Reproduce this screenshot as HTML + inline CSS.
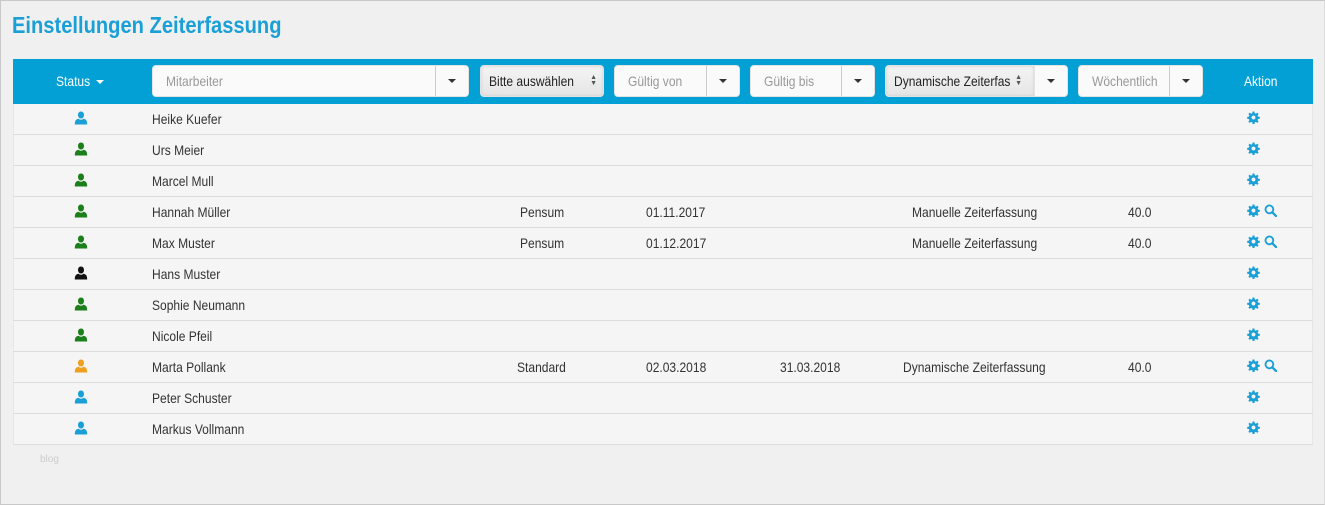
<!DOCTYPE html>
<html><head><meta charset="utf-8"><style>
*{box-sizing:border-box;margin:0;padding:0}
body{width:1325px;height:505px;background:#f0f0f0;font-family:"Liberation Sans",sans-serif;position:relative;overflow:hidden;color:#333;font-size:14px}
.n{display:inline-block;transform:scaleX(.86);transform-origin:0 50%;white-space:nowrap}
.frame{position:absolute;left:0;top:0;width:1325px;height:505px;border:1px solid #c8c8c8;border-right-color:#ddd}
h1{position:absolute;left:12px;top:12px;font-size:23px;color:#1a9fd6;font-weight:bold;transform:scaleX(.875);transform-origin:0 0;white-space:nowrap}
.hdr{position:absolute;left:13px;top:59px;width:1300px;height:45px;background:#03a0d5}
.a{position:absolute}
.ctl{position:absolute;top:6px;height:32px;background:#fafafa;border-radius:4px;border:1px solid #e3e3e3;color:#999;font-size:14px;line-height:30px;padding-left:13px;white-space:nowrap;overflow:hidden}
.btn{position:absolute;top:0;right:0;height:30px;border-left:1px solid #ccc;background:#fafafa}
.caret{position:absolute;left:50%;top:13px;margin-left:-4px;border-left:4px solid transparent;border-right:4px solid transparent;border-top:4px solid #333}
.sel{background:linear-gradient(#f4f4f4,#e6e6e6);color:#222;box-shadow:inset 0 0 3px #ccc}
.ud{position:absolute;right:6px;top:9px;font-size:7px;line-height:6px;color:#555;background:inherit}
.tw{color:#fff;font-size:14px;line-height:45px}
.row{position:absolute;left:13px;width:1300px;height:31px;background:#f5f5f5;border-bottom:1px solid #dcdcdc;border-left:1px solid #e6e6e6;border-right:1px solid #e6e6e6}
.row>span{position:absolute;top:0;line-height:31px;white-space:nowrap}
.row>span.i{top:-2px}
.row>span.g{top:-3px;left:1233px;color:#1a9fd6}
.row svg{vertical-align:middle}
</style></head><body>
<svg width="0" height="0" style="position:absolute">
<defs>
<symbol id="p" viewBox="0 0 14 14"><path d="M7 0.5C4.9 0.5 4 2.2 4 4C4 5.8 5 7.5 7 7.5C9 7.5 10 5.8 10 4C10 2.2 9.1 0.5 7 0.5Z M4.6 7.8C2 8.3 0.8 9.5 0.8 13.5H13.2C13.2 9.5 12 8.3 9.4 7.8C8.8 8.4 8 8.8 7 8.8C6 8.8 5.2 8.4 4.6 7.8Z"/></symbol>
<symbol id="g" viewBox="0 0 14 14"><path fill-rule="evenodd" d="M6 0.5h2l.3 1.8 1.3.6 1.5-1.1 1.4 1.4-1.1 1.5.6 1.3 1.8.3v2l-1.8.3-.6 1.3 1.1 1.5-1.4 1.4-1.5-1.1-1.3.6-.3 1.8h-2l-.3-1.8-1.3-.6-1.5 1.1-1.4-1.4 1.1-1.5-.6-1.3-1.8-.3v-2l1.8-.3.6-1.3-1.1-1.5 1.4-1.4 1.5 1.1 1.3-.6z M7 4.9a2.1 2.1 0 1 0 .01 0z"/></symbol>
<symbol id="s" viewBox="0 0 14 14"><circle cx="5.8" cy="5.8" r="4.2" fill="none" stroke="currentColor" stroke-width="2"/><path d="M8.8 8.8L13 13" stroke="currentColor" stroke-width="2.4" stroke-linecap="round"/></symbol>
</defs></svg>
<div class="frame"></div>
<h1>Einstellungen Zeiterfassung</h1>
<div class="hdr">
 <div class="a tw" style="left:43px"><span class="n">Status</span><span style="position:absolute;left:40px;top:21px;border-left:4px solid transparent;border-right:4px solid transparent;border-top:4px solid #fff"></span></div>
 <div class="ctl" style="left:139px;width:317px"><span class="n">Mitarbeiter</span><div class="btn" style="width:33px"><i class="caret"></i></div></div>
 <div class="ctl sel" style="left:467px;width:124px;padding-left:8px"><span class="n">Bitte auswählen</span><div class="ud">▲<br>▼</div></div>
 <div class="ctl" style="left:601px;width:126px"><span class="n">Gültig von</span><div class="btn" style="width:33px"><i class="caret"></i></div></div>
 <div class="ctl" style="left:737px;width:125px"><span class="n">Gültig bis</span><div class="btn" style="width:33px"><i class="caret"></i></div></div>
 <div class="ctl sel" style="left:872px;width:150px;padding-left:8px;border-radius:4px 0 0 4px"><span class="n">Dynamische Zeiterfas</span><div class="ud" style="right:12px;background:#ececec">▲<br>▼</div></div>
 <div class="ctl" style="left:1021px;width:34px;padding:0;border-radius:0 4px 4px 0"><i class="caret"></i></div>
 <div class="ctl" style="left:1065px;width:125px"><span class="n">Wöchentlich</span><div class="btn" style="width:33px"><i class="caret"></i></div></div>
 <div class="a tw" style="left:1231px"><span class="n">Aktion</span></div>
</div>

<div class="row" style="top:104px"><span class="i" style="left:60px;color:#1a9fd6"><svg width="14" height="14" fill="currentColor"><use href="#p"/></svg></span><span style="left:138px"><span class="n">Heike Kuefer</span></span><span class="g"><svg width="13" height="13" fill="currentColor"><use href="#g"/></svg></span></div>
<div class="row" style="top:135px"><span class="i" style="left:60px;color:#1b7f1b"><svg width="14" height="14" fill="currentColor"><use href="#p"/></svg></span><span style="left:138px"><span class="n">Urs Meier</span></span><span class="g"><svg width="13" height="13" fill="currentColor"><use href="#g"/></svg></span></div>
<div class="row" style="top:166px"><span class="i" style="left:60px;color:#1b7f1b"><svg width="14" height="14" fill="currentColor"><use href="#p"/></svg></span><span style="left:138px"><span class="n">Marcel Mull</span></span><span class="g"><svg width="13" height="13" fill="currentColor"><use href="#g"/></svg></span></div>
<div class="row" style="top:197px"><span class="i" style="left:60px;color:#1b7f1b"><svg width="14" height="14" fill="currentColor"><use href="#p"/></svg></span><span style="left:138px"><span class="n">Hannah Müller</span></span><span style="left:506px"><span class="n">Pensum</span></span><span style="left:632px"><span class="n">01.11.2017</span></span><span style="left:898px"><span class="n">Manuelle Zeiterfassung</span></span><span style="left:1114px"><span class="n">40.0</span></span><span class="g"><svg width="13" height="13" fill="currentColor"><use href="#g"/></svg> <svg width="13" height="13" fill="currentColor"><use href="#s"/></svg></span></div>
<div class="row" style="top:228px"><span class="i" style="left:60px;color:#1b7f1b"><svg width="14" height="14" fill="currentColor"><use href="#p"/></svg></span><span style="left:138px"><span class="n">Max Muster</span></span><span style="left:506px"><span class="n">Pensum</span></span><span style="left:632px"><span class="n">01.12.2017</span></span><span style="left:898px"><span class="n">Manuelle Zeiterfassung</span></span><span style="left:1114px"><span class="n">40.0</span></span><span class="g"><svg width="13" height="13" fill="currentColor"><use href="#g"/></svg> <svg width="13" height="13" fill="currentColor"><use href="#s"/></svg></span></div>
<div class="row" style="top:259px"><span class="i" style="left:60px;color:#111"><svg width="14" height="14" fill="currentColor"><use href="#p"/></svg></span><span style="left:138px"><span class="n">Hans Muster</span></span><span class="g"><svg width="13" height="13" fill="currentColor"><use href="#g"/></svg></span></div>
<div class="row" style="top:290px"><span class="i" style="left:60px;color:#1b7f1b"><svg width="14" height="14" fill="currentColor"><use href="#p"/></svg></span><span style="left:138px"><span class="n">Sophie Neumann</span></span><span class="g"><svg width="13" height="13" fill="currentColor"><use href="#g"/></svg></span></div>
<div class="row" style="top:321px"><span class="i" style="left:60px;color:#1b7f1b"><svg width="14" height="14" fill="currentColor"><use href="#p"/></svg></span><span style="left:138px"><span class="n">Nicole Pfeil</span></span><span class="g"><svg width="13" height="13" fill="currentColor"><use href="#g"/></svg></span></div>
<div class="row" style="top:352px"><span class="i" style="left:60px;color:#f0a020"><svg width="14" height="14" fill="currentColor"><use href="#p"/></svg></span><span style="left:138px"><span class="n">Marta Pollank</span></span><span style="left:503px"><span class="n">Standard</span></span><span style="left:632px"><span class="n">02.03.2018</span></span><span style="left:766px"><span class="n">31.03.2018</span></span><span style="left:889px"><span class="n">Dynamische Zeiterfassung</span></span><span style="left:1114px"><span class="n">40.0</span></span><span class="g"><svg width="13" height="13" fill="currentColor"><use href="#g"/></svg> <svg width="13" height="13" fill="currentColor"><use href="#s"/></svg></span></div>
<div class="row" style="top:383px"><span class="i" style="left:60px;color:#1a9fd6"><svg width="14" height="14" fill="currentColor"><use href="#p"/></svg></span><span style="left:138px"><span class="n">Peter Schuster</span></span><span class="g"><svg width="13" height="13" fill="currentColor"><use href="#g"/></svg></span></div>
<div class="row" style="top:414px"><span class="i" style="left:60px;color:#1a9fd6"><svg width="14" height="14" fill="currentColor"><use href="#p"/></svg></span><span style="left:138px"><span class="n">Markus Vollmann</span></span><span class="g"><svg width="13" height="13" fill="currentColor"><use href="#g"/></svg></span></div>
<div class="a" style="left:40px;top:454px;font-size:10px;color:#ccc">blog</div>
</body></html>
